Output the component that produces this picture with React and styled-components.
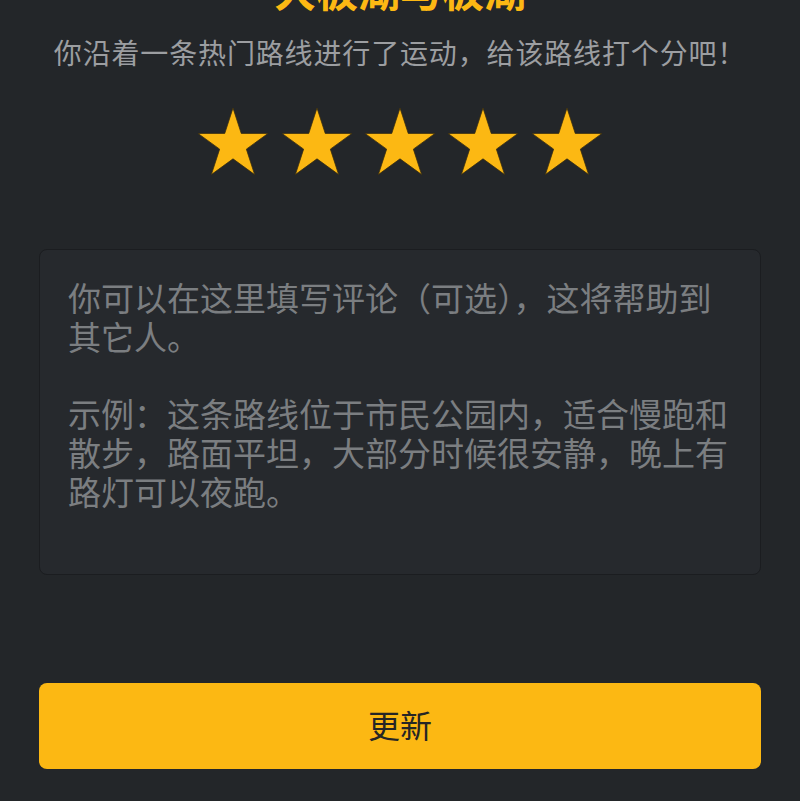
import React from 'react'
import styled, { createGlobalStyle } from 'styled-components'

const Global = createGlobalStyle`
  html, body {
    margin: 0;
    padding: 0;
    background: #232629;
    overflow: hidden;
  }
  * {
    box-sizing: border-box;
  }
`

const Page = styled.div`
  width: 800px;
  height: 801px;
  padding: 0 39px;
  display: flex;
  flex-direction: column;
  align-items: center;
  font-family: 'Noto Sans CJK SC', 'Noto Sans', sans-serif;
  background: #232629;
`

const Title = styled.h1`
  margin: -36px 0 0;
  font-size: 42px;
  line-height: 50px;
  font-weight: 700;
  color: #fcb813;
  text-align: center;
  white-space: nowrap;
`

const Subtitle = styled.p`
  margin: 18px 0 0;
  font-size: 28px;
  line-height: 40px;
  letter-spacing: 0.85px;
  color: #9c9ea1;
  text-align: center;
  white-space: nowrap;
`

const Stars = styled.div`
  margin-top: 36px;
  display: flex;
  gap: 13.4px;
`

const StarButton = styled.button`
  padding: 0;
  border: 0;
  background: none;
  display: block;
  width: 70px;
  height: 67px;
  cursor: pointer;

  svg {
    display: block;
  }
`

const Comment = styled.textarea`
  margin-top: 74px;
  width: 100%;
  height: 326px;
  padding: 28px 28px;
  background: #26292d;
  border: 1px solid #1b1d20;
  border-radius: 8px;
  resize: none;
  outline: none;
  font-family: inherit;
  font-size: 33px;
  line-height: 38.7px;
  color: #d0d0d0;

  &::placeholder {
    color: #7b7e81;
  }
`

const Submit = styled.button`
  margin-top: 108px;
  width: 100%;
  height: 86px;
  border: 0;
  border-radius: 8px;
  background: #fcb813;
  color: #262626;
  font-family: inherit;
  font-size: 32px;
  line-height: 40px;
  padding: 0 0 4px;
  cursor: pointer;
`

const starPoints = (() => {
  const cx = 35
  const cy = 36.8
  const R = 36.8
  const r = R * 0.382
  const pts = []
  for (let i = 0; i < 10; i++) {
    const rad = i % 2 === 0 ? R : r
    const a = (Math.PI / 5) * i - Math.PI / 2
    pts.push(`${(cx + rad * Math.cos(a)).toFixed(2)},${(cy + rad * Math.sin(a)).toFixed(2)}`)
  }
  return pts.join(' ')
})()

const Star = () => (
  <StarButton>
    <svg width="70" height="67" viewBox="0 0 70 67">
      <polygon points={starPoints} fill="#fcb813" stroke="#3a2e10" strokeWidth="0.8" strokeLinejoin="miter" />
    </svg>
  </StarButton>
)

const placeholder =
  '你可以在这里填写评论（可选），这将帮助到其它人。\n\n示例：这条路线位于市民公园内，适合慢跑和散步，路面平坦，大部分时候很安静，晚上有路灯可以夜跑。'

export default function App() {
  return (
    <>
      <Global />
      <Page>
        <Title>大板湖与板湖</Title>
        <Subtitle>你沿着一条热门路线进行了运动，给该路线打个分吧！</Subtitle>
        <Stars>
          {[0, 1, 2, 3, 4].map(i => (
            <Star key={i} />
          ))}
        </Stars>
        <Comment placeholder={placeholder} />
        <Submit>更新</Submit>
      </Page>
    </>
  )
}
